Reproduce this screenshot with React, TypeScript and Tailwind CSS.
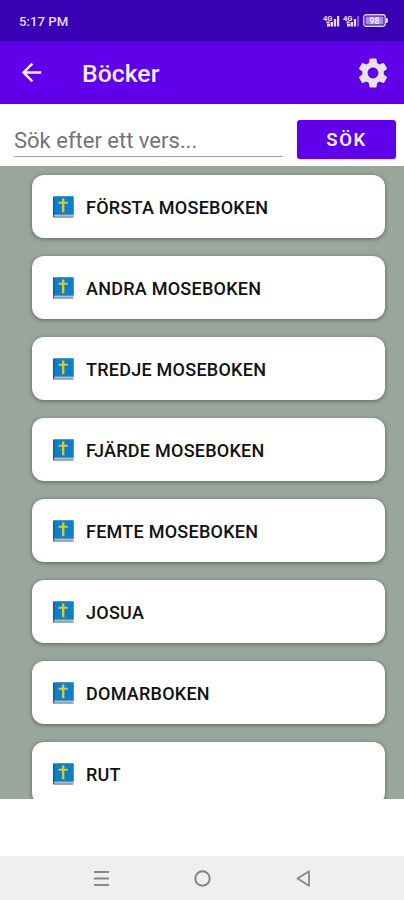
import { useState } from "react";

const books = [
  "Första Moseboken",
  "Andra Moseboken",
  "Tredje Moseboken",
  "Fjärde Moseboken",
  "Femte Moseboken",
  "Josua",
  "Domarboken",
  "Rut",
];

function SignalIcon({ weak = false }: { weak?: boolean }) {
  return (
    <svg width="17" height="13" viewBox="0 0 17 13" fill="#e6defa">
      <text x="0" y="6.5" fontSize="7.5" fontWeight="700" textLength="9.5" lengthAdjust="spacingAndGlyphs">
        4G
      </text>
      <path d="M3.500 7.500h3v2h-3z" />
      <rect x="4" y="10" width="3" height="2.5" />
      <rect x="7.500" y="8" width="2.500" height="4.500" />
      <rect x="10.800" y="5" width="2.300" height="7.500" />
      <rect x="14" y="2" width="2.200" height="10.500" opacity={weak ? 0.4 : 1} />
    </svg>
  );
}

function BatteryIcon() {
  return (
    <svg width="25" height="13" viewBox="0 0 25 13">
      <rect x="0.75" y="0.75" width="21.5" height="11.5" rx="2.5" fill="none" stroke="#e0d6f8" strokeWidth="1.3" />
      <rect x="2.5" y="2.5" width="18" height="8" rx="1" fill="#a68ce0" />
      <path d="M23 4h1l1 1v3l-1 1h-1z" fill="#e0d6f8" />
      <text x="11.5" y="9.5" fontSize="8.5" fontWeight="700" textAnchor="middle" fill="#f4effd">
        98
      </text>
    </svg>
  );
}

function BookIcon() {
  return (
    <svg width="22" height="22" viewBox="0 0 22 22" className="shrink-0">
      <path d="M1 0.5h20.500v18.500H3L1 20.500z" fill="#0d5ba3" />
      <rect x="2.500" y="0.5" width="19" height="18" fill="#0d80c8" />
      <path d="M2.500 18.500h19v2.500H2z" fill="#b4bcc4" />
      <path d="M1 19.500v2h20.500v-.8H3z" fill="#2a628e" />
      <path d="M10 2.500h2.400v3.200h3.400v2.100h-3.400v8.400H10V7.800H6.600V5.700H10z" fill="#dcc63c" />
    </svg>
  );
}

export default function App() {
  const [query, setQuery] = useState("");

  return (
    <div className="flex h-[900px] w-full flex-col overflow-hidden bg-white font-['Roboto','Noto_Sans',sans-serif]">
      {/* Status bar */}
      <div className="flex h-[41px] shrink-0 items-center justify-between bg-[#3a00b3] pt-0.5 pr-4 pl-[19px]">
        <span className="text-[13.200px] font-medium text-[#e6defa]">5:17 PM</span>
        <div className="flex items-center gap-[3px] pb-0.5">
          <SignalIcon />
          <SignalIcon weak />
          <BatteryIcon />
        </div>
      </div>

      {/* App bar */}
      <header className="flex h-[63px] shrink-0 items-center bg-[#6000ea] pr-[13px] pl-[17px]">
        <button aria-label="Tillbaka">
          <svg width="29" height="29" viewBox="0 0 24 24" fill="#f3edff">
            <path d="M20 11H7.830l5.590-5.590L12 4l-8 8 8 8 1.410-1.410L7.830 13H20v-2z" />
          </svg>
        </button>
        <h1 className="ml-9 flex-1 pt-[3px] text-[24.800px] font-medium text-[#f3edff]">Böcker</h1>
        <button aria-label="Inställningar">
          <svg width="36" height="36" viewBox="0 0 24 24" fill="#e9e2e8">
            <path d="M19.14 12.94c.04-.3.06-.61.06-.94 0-.32-.02-.64-.07-.94l2.030-1.580c.18-.14.23-.41.12-.61l-1.920-3.320c-.12-.22-.37-.29-.59-.22l-2.390.96c-.5-.38-1.030-.7-1.620-.94l-.36-2.540c-.04-.24-.24-.41-.48-.41h-3.840c-.24 0-.43.17-.47.41l-.36 2.540c-.59.24-1.130.57-1.620.94l-2.390-.96c-.22-.08-.47 0-.59.22L2.740 8.870c-.12.21-.08.47.12.61l2.030 1.580c-.05.3-.09.63-.09.94s.02.64.07.94l-2.030 1.580c-.18.14-.23.41-.12.61l1.920 3.320c.12.22.37.29.59.22l2.390-.96c.5.38 1.030.7 1.620.94l.36 2.540c.05.24.24.41.48.41h3.840c.24 0 .44-.17.47-.41l.36-2.540c.59-.24 1.130-.56 1.620-.94l2.390.96c.22.08.47 0 .59-.22l1.920-3.320c.12-.22.07-.47-.12-.61l-2.010-1.580zM12 15.600c-1.980 0-3.600-1.620-3.600-3.600s1.620-3.600 3.600-3.600 3.600 1.620 3.600 3.600-1.620 3.600-3.600 3.600z" />
          </svg>
        </button>
      </header>

      {/* Search */}
      <div className="flex h-[62px] shrink-0 items-start pr-2 pl-3.5">
        <input
          value={query}
          onChange={(e) => setQuery(e.target.value)}
          placeholder="Sök efter ett vers..."
          className="mt-[18px] h-[35px] w-[269px] border-b border-[#a0a0a0] pt-0.5 text-[22px] outline-none placeholder:text-[#747474]"
        />
        <button className="mt-4 ml-3.5 h-[39px] flex-1 rounded-[3px] bg-[#6000ea] pt-0.5 text-[18.500px] font-semibold tracking-[1.500px] text-[#f3edff] shadow-sm">
          SÖK
        </button>
      </div>

      {/* Book list */}
      <main className="flex h-[633px] shrink-0 flex-col gap-[18px] overflow-hidden bg-[#98a69b] pt-[9px] pr-[19px] pl-8">
        {books.map((book) => (
          <button
            key={book}
            className="flex h-[63px] shrink-0 items-center rounded-xl bg-white pl-5 shadow-[0_1px_4px_rgba(0,0,0,0.4)]"
          >
            <BookIcon />
            <span className="ml-3 pt-0.5 text-[18px] font-medium tracking-[0.250px] text-[#111111] uppercase">
              {book}
            </span>
          </button>
        ))}
      </main>

      <div className="flex-1" />

      {/* System navigation */}
      <nav className="flex h-[44px] shrink-0 items-center justify-center gap-[84px] bg-[#efefef]">
        <svg width="17" height="17" viewBox="0 0 17 17" stroke="#888888" strokeWidth="2">
          <path d="M1 2h15M1 8.500h15M1 15h15" />
        </svg>
        <svg width="17" height="17" viewBox="0 0 17 17" fill="none" stroke="#808080" strokeWidth="1.900">
          <circle cx="8.500" cy="8.500" r="7.200" />
        </svg>
        <svg width="17" height="17" viewBox="0 0 17 17" fill="none" stroke="#888888" strokeWidth="1.800" strokeLinejoin="round">
          <path d="M14 1.200v14.600L2.500 8.500z" />
        </svg>
      </nav>
    </div>
  );
}
